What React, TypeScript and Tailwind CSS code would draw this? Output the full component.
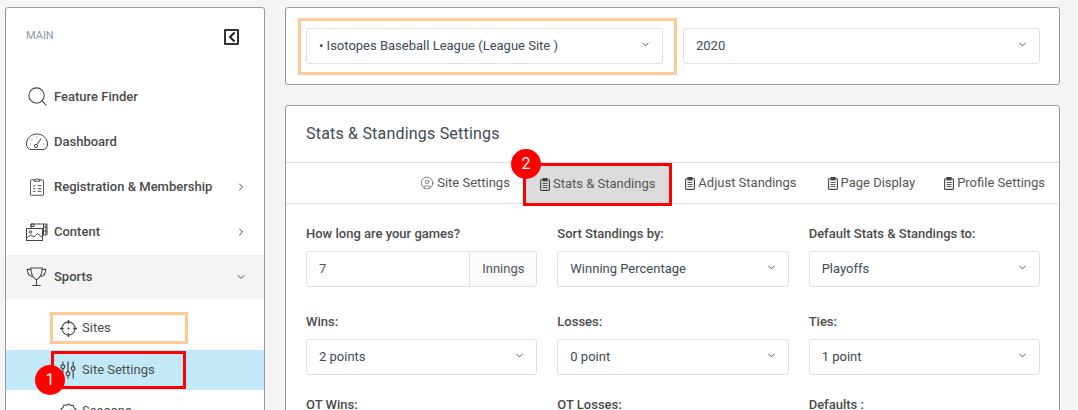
import { ChevronDown, ChevronRight, ChevronLeft, Search, CircleUser } from 'lucide-react'
import type { ReactNode } from 'react'

const font = { fontFamily: 'Roboto, sans-serif' }

const GaugeIcon = () => (
  <svg width="22" height="18" viewBox="0 0 22 18" fill="none" stroke="#444" strokeWidth="1">
    <path d="M5 16.500h12c2.500 0 4.500-2 4.500-5.500C21.500 5.500 16.800 1 11 1S.5 5.500.5 11c0 3.500 2 5.500 4.500 5.500Z" />
    <circle cx="10" cy="13" r="1.600" />
    <path d="M11 11.500 15 5.500M4 11h.8M6 6.500l.6.6M11 3.500v.8M17.500 11h.8" />
  </svg>
)

const ClipboardListIcon = () => (
  <svg width="14" height="19" viewBox="0 0 16 21" fill="none" stroke="#444" strokeWidth="1.100">
    <path d="M5 3H1.500a1 1 0 0 0-1 1v15.500a1 1 0 0 0 1 1h13a1 1 0 0 0 1-1V4a1 1 0 0 0-1-1H11" />
    <path d="M5 4.500V2.500h2a1 1 0 0 1 2 0h2v2Z" />
    <path d="M9 9.500h4M9 13h4M9 16h4M3.500 9.500l1 1 1.500-2M3.500 13h2.500M3.500 16h2.500" />
  </svg>
)

const ContentIcon = () => (
  <svg width="22" height="18" viewBox="0 0 22 18" fill="none" stroke="#444" strokeWidth="1">
    <path d="M5 5V1h15v11h-3" />
    <path d="M5 1h3v2.500H5zM17.500 1v11M17.500 4H21M17.500 8H21M21 .5v11.500" />
    <rect x=".5" y="5.500" width="16" height="12" />
    <circle cx="4.500" cy="9" r="1.300" />
    <path d="M.5 15l4.500-3 3 2 3.500-3.500 5 4" />
  </svg>
)

const TrophyIcon = () => (
  <svg width="21" height="19" viewBox="0 0 21 20" fill="none" stroke="#444" strokeWidth="1.100">
    <path d="M4.500 1h12c0 6-1.500 10-6 12.500C6 11 4.500 7 4.500 1Z" />
    <path d="M4.500 2.500H.8c0 4 1.500 6.500 5.200 7.500M16.500 2.500h3.700c0 4-1.500 6.500-5.200 7.500M10.500 13.500v5.500M6 19.500h9" />
  </svg>
)

const CrosshairIcon = () => (
  <svg width="17" height="17" viewBox="0 0 18 18" fill="none" stroke="#444" strokeWidth="1.100">
    <circle cx="9" cy="9" r="7" />
    <path d="M9 0v4M9 14v4M0 9h4M14 9h4" strokeWidth="1.500" />
    <circle cx="9" cy="9" r=".6" fill="#444" />
  </svg>
)

const SlidersIcon = () => (
  <svg width="16" height="18" viewBox="0 0 17 18" fill="none" stroke="#444" strokeWidth="1.300">
    <path d="M3 0v3.500M3 7.500V18M8.500 0v11M8.500 15v3M14 0v5.500M14 9.500V18" />
    <circle cx="3" cy="5.500" r="2" />
    <circle cx="8.500" cy="13" r="2" />
    <circle cx="14" cy="7.500" r="2" />
  </svg>
)

const SeasonsIcon = () => (
  <svg width="17" height="17" viewBox="0 0 18 18" fill="none" stroke="#444" strokeWidth="1.100">
    <path d="M9 1l2.200 1.600 2.700-.2.800 2.600 2.200 1.600-.9 2.500.9 2.500-2.200 1.600-.8 2.600-2.700-.2L9 17l-2.200-1.600-2.700.2-.8-2.600L1.100 11.400 2 8.900 1.100 6.400 3.300 4.800l.8-2.600 2.700.2Z" />
    <path d="M6 9l2 2 4-4" />
  </svg>
)

const TabClipboardIcon = () => (
  <svg width="10" height="13" viewBox="0 0 10 13" fill="none" stroke="#444" strokeWidth="1.100">
    <rect x=".6" y="1.800" width="8.800" height="10.600" rx=".8" />
    <path d="M3 .5h4v2.500H3z" fill="#444" />
    <path d="M2.500 5.500h5M2.500 7.500h5M2.500 9.500h5" strokeWidth=".9" />
  </svg>
)

const NavItem = ({ icon, label, chevron, className = 'h-[45px]' }: { icon: ReactNode; label: string; chevron?: 'right' | 'down'; className?: string }) => (
  <div className={`flex items-center pl-[20px] pr-[17px] ${className}`}>
    <div className="w-[28px] flex justify-start items-center">{icon}</div>
    <span className="text-[13px] font-medium text-[#4b4b4b]">{label}</span>
    {chevron === 'right' && <ChevronRight className="ml-auto text-[#444]" size={12} />}
    {chevron === 'down' && <ChevronDown className="ml-auto text-[#444]" size={12} />}
  </div>
)

const SubItem = ({ icon, label, className = '' }: { icon: ReactNode; label: string; className?: string }) => (
  <div className={`flex items-center pl-[54px] ${className}`}>
    <div className="w-[22px] flex items-center">{icon}</div>
    <span className="text-[13px] text-[#4b4b4b]">{label}</span>
  </div>
)

const Select = ({ value, className = '' }: { value: string; className?: string }) => (
  <div className={`h-[36px] bg-white border border-[#e0e0e0] rounded-[3px] flex items-center justify-between pl-[12px] pr-[11px] ${className}`}>
    <span className="text-[13px] text-[#404a55]">{value}</span>
    <ChevronDown className="text-[#444] mb-[3px]" size={11} />
  </div>
)

const Field = ({ label, children, className = '' }: { label: string; children: ReactNode; className?: string }) => (
  <div className={`flex flex-col ${className}`}>
    <label className="h-[18px] leading-[20px] mb-[9px] text-[13px] font-medium text-[#4b4b4b]">{label}</label>
    {children}
  </div>
)

const Tab = ({ icon, label, className = '' }: { icon: ReactNode; label: string; className?: string }) => (
  <div className={`h-full flex items-center gap-[3px] text-[13px] text-[#555] ${className}`}>
    {icon}
    <span>{label}</span>
  </div>
)

const Badge = ({ n, className }: { n: number; className: string }) => (
  <div className={`absolute w-[30px] h-[30px] rounded-full bg-[#ff0000] text-white text-[16px] flex items-center justify-center ${className}`}>
    {n}
  </div>
)

export default function App() {
  return (
    <div style={font} className="h-[410px] w-[1078px] overflow-hidden bg-[#f4f4f4] flex items-start gap-[20px] pl-[5px] pt-[7px]">
      <aside className="w-[260px] h-[440px] shrink-0 bg-white border border-[#9a9a9a] rounded-[3px] relative">
        <div className="flex justify-between pl-[20px] pr-[25px] pt-[21px] h-[66px]">
          <span className="text-[11px] leading-[14px] text-[#8c97a5]">MAIN</span>
          <div className="w-[15px] h-[16px] border-2 border-[#333] rounded-[1px] flex items-center justify-center">
            <ChevronLeft className="text-[#222] shrink-0" size={16} strokeWidth={3} />
          </div>
        </div>
        <NavItem icon={<Search size={23} strokeWidth={1.100} className="text-[#444]" />} label="Feature Finder" />
        <NavItem icon={<GaugeIcon />} label="Dashboard" />
        <NavItem icon={<div className="ml-[4px] flex"><ClipboardListIcon /></div>} label="Registration & Membership" chevron="right" />
        <NavItem icon={<ContentIcon />} label="Content" chevron="right" />
        <NavItem icon={<TrophyIcon />} label="Sports" chevron="down" className="h-[44px] mt-[1px] pb-[1px] bg-[#f4f4f4]" />
        <div className="h-[10px]" />
        <SubItem icon={<CrosshairIcon />} label="Sites" className="h-[41px] pb-[3px]" />
        <SubItem icon={<SlidersIcon />} label="Site Settings" className="h-[40px] bg-[#c3e9f9]" />
        <SubItem icon={<SeasonsIcon />} label="Seasons" className="h-[40px] pt-[2px]" />

        <div className="absolute left-[44px] top-[304px] w-[138px] h-[32px] border-[3px] border-[#fdc994]" />
        <div className="absolute left-[45px] top-[343px] w-[135px] h-[38px] border-[3px] border-[#ff0000]" />
        <Badge n={1} className="left-[29px] top-[357px]" />
      </aside>

      <main className="w-[775px] shrink-0 flex flex-col gap-[20px]">
        <section className="h-[78px] bg-white border border-[#9a9a9a] rounded-[3px] flex items-start pt-[20px] pl-[20px] gap-[20px] relative">
          <Select value="• Isotopes Baseball League (League Site )" className="w-[357px]" />
          <Select value="2020" className="w-[357px]" />
          <div className="absolute left-[12px] top-[10px] w-[379px] h-[57px] border-[3px] border-[#fdc994]" />
        </section>

        <section className="h-[340px] bg-white border border-[#9a9a9a] rounded-[3px] relative">
          <div className="h-[57px] pl-[20px] pt-[17px] border-b border-[#dedede]">
            <h2 className="text-[16px] leading-[22px] tracking-[0.2px] text-[#404a55]">Stats & Standings Settings</h2>
          </div>
          <div className="h-[41px] border-b border-[#dedede] flex items-center justify-end pr-[14px]">
            <Tab icon={<CircleUser size={14} strokeWidth={1.200} />} label="Site Settings" className="mr-[30px]" />
            <Tab icon={<TabClipboardIcon />} label="Stats & Standings" className="mr-[30px]" />
            <Tab icon={<TabClipboardIcon />} label="Adjust Standings" className="mr-[31px]" />
            <Tab icon={<TabClipboardIcon />} label="Page Display" className="mr-[29px]" />
            <Tab icon={<TabClipboardIcon />} label="Profile Settings" />
          </div>
          <div className="grid grid-cols-3 gap-x-[20px] gap-y-[20px] pl-[20px] pr-[19px] pt-[20px]">
            <Field label="How long are your games?" className="mb-[5px]">
              <div className="h-[36px] border border-[#e0e0e0] rounded-[3px] flex text-[13px] text-[#555]">
                <span className="flex-1 flex items-center pl-[12px]">7</span>
                <span className="w-[67px] border-l border-[#e0e0e0] bg-[#fbfbfb] flex items-center justify-center rounded-r-[3px]">Innings</span>
              </div>
            </Field>
            <Field label="Sort Standings by:" className="mb-[5px]"><Select value="Winning Percentage" /></Field>
            <Field label="Default Stats & Standings to:" className="mb-[5px]"><Select value="Playoffs" /></Field>
            <Field label="Wins:"><Select value="2 points" /></Field>
            <Field label="Losses:"><Select value="0 point" /></Field>
            <Field label="Ties:"><Select value="1 point" /></Field>
            <Field label="OT Wins:"><Select value="0 point" /></Field>
            <Field label="OT Losses:"><Select value="0 point" /></Field>
            <Field label="Defaults :"><Select value="0 point" /></Field>
          </div>

          <div className="absolute left-[237px] top-[57px] w-[149px] h-[43px] border-[3px] border-[#ff0000] bg-[#dcdcdc] flex items-center pl-[14px] pb-[1px] gap-[3px] text-[13px] text-[#555]">
            <TabClipboardIcon />
            <span>Stats & Standings</span>
          </div>
          <Badge n={2} className="left-[225px] top-[43px]" />
        </section>
      </main>
    </div>
  )
}
